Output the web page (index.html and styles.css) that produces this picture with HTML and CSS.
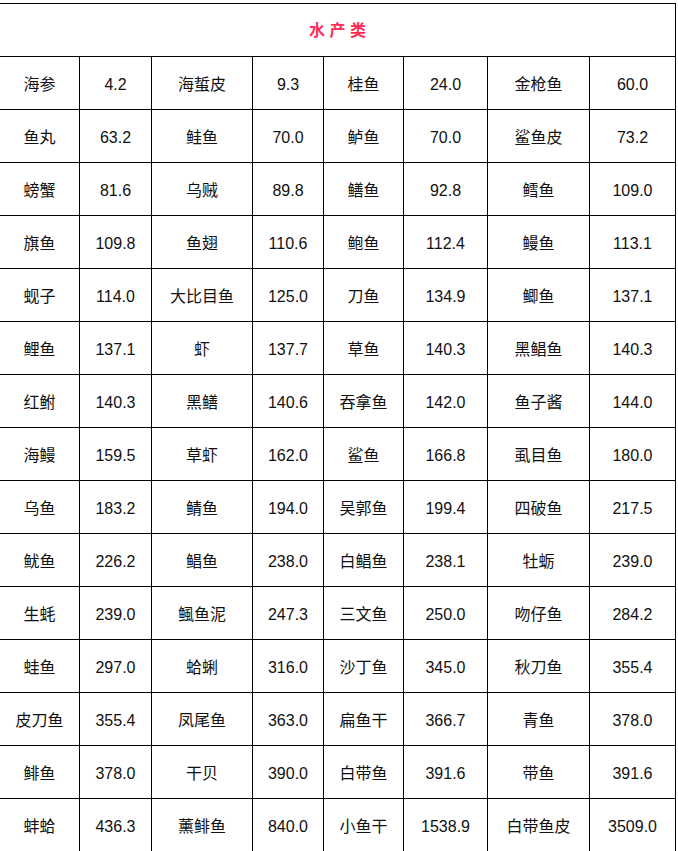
FILE: index.html
```html
<!DOCTYPE html>
<html lang="zh-CN">
<head>
<meta charset="utf-8">
<title>水产类</title>
<link rel="stylesheet" href="styles.css">
</head>
<body>
<div class="table">
  <div class="cell head">水 产 类</div>
  <div class="cell">海参</div><div class="cell">4.2</div><div class="cell">海蜇皮</div><div class="cell">9.3</div><div class="cell">桂鱼</div><div class="cell">24.0</div><div class="cell">金枪鱼</div><div class="cell">60.0</div>
  <div class="cell">鱼丸</div><div class="cell">63.2</div><div class="cell">鲑鱼</div><div class="cell">70.0</div><div class="cell">鲈鱼</div><div class="cell">70.0</div><div class="cell">鲨鱼皮</div><div class="cell">73.2</div>
  <div class="cell">螃蟹</div><div class="cell">81.6</div><div class="cell">乌贼</div><div class="cell">89.8</div><div class="cell">鳝鱼</div><div class="cell">92.8</div><div class="cell">鳕鱼</div><div class="cell">109.0</div>
  <div class="cell">旗鱼</div><div class="cell">109.8</div><div class="cell">鱼翅</div><div class="cell">110.6</div><div class="cell">鲍鱼</div><div class="cell">112.4</div><div class="cell">鳗鱼</div><div class="cell">113.1</div>
  <div class="cell">蚬子</div><div class="cell">114.0</div><div class="cell">大比目鱼</div><div class="cell">125.0</div><div class="cell">刀鱼</div><div class="cell">134.9</div><div class="cell">鲫鱼</div><div class="cell">137.1</div>
  <div class="cell">鲤鱼</div><div class="cell">137.1</div><div class="cell">虾</div><div class="cell">137.7</div><div class="cell">草鱼</div><div class="cell">140.3</div><div class="cell">黑鲳鱼</div><div class="cell">140.3</div>
  <div class="cell">红鲋</div><div class="cell">140.3</div><div class="cell">黑鳝</div><div class="cell">140.6</div><div class="cell">吞拿鱼</div><div class="cell">142.0</div><div class="cell">鱼子酱</div><div class="cell">144.0</div>
  <div class="cell">海鳗</div><div class="cell">159.5</div><div class="cell">草虾</div><div class="cell">162.0</div><div class="cell">鲨鱼</div><div class="cell">166.8</div><div class="cell">虱目鱼</div><div class="cell">180.0</div>
  <div class="cell">乌鱼</div><div class="cell">183.2</div><div class="cell">鲭鱼</div><div class="cell">194.0</div><div class="cell">吴郭鱼</div><div class="cell">199.4</div><div class="cell">四破鱼</div><div class="cell">217.5</div>
  <div class="cell">鱿鱼</div><div class="cell">226.2</div><div class="cell">鲳鱼</div><div class="cell">238.0</div><div class="cell">白鲳鱼</div><div class="cell">238.1</div><div class="cell">牡蛎</div><div class="cell">239.0</div>
  <div class="cell">生蚝</div><div class="cell">239.0</div><div class="cell">鲺鱼泥</div><div class="cell">247.3</div><div class="cell">三文鱼</div><div class="cell">250.0</div><div class="cell">吻仔鱼</div><div class="cell">284.2</div>
  <div class="cell">蛙鱼</div><div class="cell">297.0</div><div class="cell">蛤蜊</div><div class="cell">316.0</div><div class="cell">沙丁鱼</div><div class="cell">345.0</div><div class="cell">秋刀鱼</div><div class="cell">355.4</div>
  <div class="cell">皮刀鱼</div><div class="cell">355.4</div><div class="cell">凤尾鱼</div><div class="cell">363.0</div><div class="cell">扁鱼干</div><div class="cell">366.7</div><div class="cell">青鱼</div><div class="cell">378.0</div>
  <div class="cell">鲱鱼</div><div class="cell">378.0</div><div class="cell">干贝</div><div class="cell">390.0</div><div class="cell">白带鱼</div><div class="cell">391.6</div><div class="cell">带鱼</div><div class="cell">391.6</div>
  <div class="cell">蚌蛤</div><div class="cell">436.3</div><div class="cell">薰鲱鱼</div><div class="cell">840.0</div><div class="cell">小鱼干</div><div class="cell">1538.9</div><div class="cell">白带鱼皮</div><div class="cell">3509.0</div>
</div>
</body>
</html>
```

FILE: styles.css
```css
html, body {
  margin: 0;
  padding: 0;
  background: #fff;
}

body {
  font-family: "Liberation Sans", "Noto Sans CJK SC", sans-serif;
  font-size: 16px;
  color: #111;
}

.table {
  display: grid;
  grid-template-columns: 79px 71px 100px 70px 79px 83px 101px 85px;
  grid-auto-rows: 52px;
  gap: 1px;
  padding: 1px;
  background: #000;
  width: max-content;
  margin: 3px 0 0 -1px;
}

.cell {
  background: #fff;
  display: flex;
  align-items: center;
  justify-content: center;
  white-space: nowrap;
  line-height: 1;
  padding-top: 3px;
}

.head {
  grid-column: 1 / -1;
  color: #ff2d55;
  font-weight: bold;
  padding-top: 2px;
}
```
